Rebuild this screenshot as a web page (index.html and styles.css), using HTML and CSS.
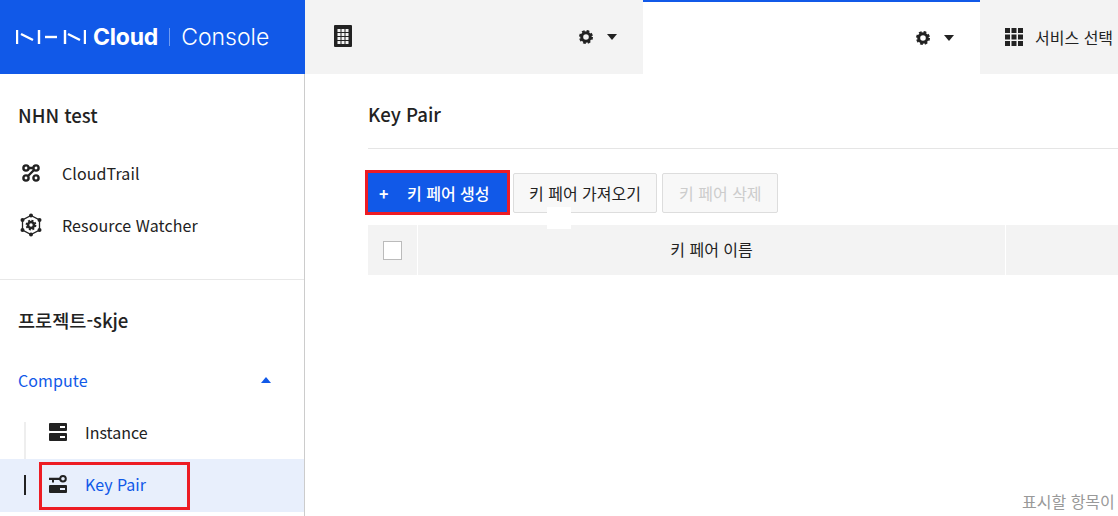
FILE: index.html
```html
<!doctype html>
<html lang="ko">
  <head>
    <meta charset="utf-8">
    <title>Key Pair - NHN Cloud Console</title>
    <link rel="stylesheet" href="styles.css">
  </head>
<body>
  <svg class="defs" width="0" height="0">
    <defs>
      <g id="gear" fill="none" stroke="#222">
        <circle cx="7" cy="7" r="4.300" stroke-width="3"/>
        <circle cx="7" cy="7" r="6" stroke-width="2" stroke-dasharray="2.700 2"/>
      </g>
    </defs>
  </svg>

  <header class="topbar">
    <div class="logo">
      <svg class="logo-mark" width="70" height="16" viewBox="0 0 70 16">
        <g stroke="#fff" stroke-width="2.400" fill="none">
          <path d="M1 1V15M5 5L17 11M23 1V15"/>
          <path d="M29 8H41"/>
          <path d="M49 1V15M52 5L64 11M69 1V15"/>
        </g>
      </svg>
      <span class="logo-cloud">Cloud</span>
      <span class="logo-sep"></span>
      <span class="logo-console">Console</span>
    </div>
    <div class="tab tab-org">
      <svg class="tab-icon" width="18" height="22" viewBox="0 0 18 22">
        <rect width="18" height="22" rx="1" fill="#222"/>
        <g fill="#f3f3f3">
          <rect x="3.500" y="4" width="3" height="3"/><rect x="7.500" y="4" width="3" height="3"/><rect x="11.500" y="4" width="3" height="3"/>
          <rect x="3.500" y="8" width="3" height="3"/><rect x="7.500" y="8" width="3" height="3"/><rect x="11.500" y="8" width="3" height="3"/>
          <rect x="3.500" y="12" width="3" height="3"/><rect x="7.500" y="12" width="3" height="3"/><rect x="11.500" y="12" width="3" height="3"/>
          <rect x="3.500" y="16" width="3" height="3"/><rect x="7.500" y="16" width="3" height="3"/><rect x="11.500" y="16" width="3" height="3"/>
        </g>
      </svg>
      <div class="tab-tools">
        <svg class="gear" width="14" height="14" viewBox="0 0 14 14"><use href="#gear"/></svg>
        <span class="caret"></span>
      </div>
    </div>
    <div class="tab tab-project">
      <div class="tab-tools">
        <svg class="gear" width="14" height="14" viewBox="0 0 14 14"><use href="#gear"/></svg>
        <span class="caret"></span>
      </div>
    </div>
    <div class="tab tab-service">
      <svg width="18" height="18" viewBox="0 0 18 18" fill="#222">
        <rect width="5" height="5"/><rect x="6.500" width="5" height="5"/><rect x="13" width="5" height="5"/>
        <rect y="6.500" width="5" height="5"/><rect x="6.500" y="6.500" width="5" height="5"/><rect x="13" y="6.500" width="5" height="5"/>
        <rect y="13" width="5" height="5"/><rect x="6.500" y="13" width="5" height="5"/><rect x="13" y="13" width="5" height="5"/>
      </svg>
      <span>서비스 선택</span>
    </div>
  </header>

  <div class="layout">
    <aside class="sidebar">
      <section class="side-org">
        <h2 class="side-title">NHN test</h2>
        <ul class="side-list">
          <li class="side-item">
            <span class="side-icon">
              <svg width="18" height="18" viewBox="0 0 18 18" fill="none" stroke="#222" stroke-width="2.400">
                <circle cx="4" cy="4" r="2.600"/><circle cx="14" cy="4" r="2.600"/>
                <circle cx="4" cy="14" r="2.600"/><circle cx="14" cy="14" r="2.600"/>
                <path d="M6.500 4H11.500M12 6L6 12"/>
              </svg>
            </span>
            CloudTrail
          </li>
          <li class="side-item">
            <span class="side-icon">
              <svg width="22" height="24" viewBox="0 0 22 24">
                <path d="M11 2.500L19.500 7V17L11 21.500 2.500 17V7Z" fill="none" stroke="#222" stroke-width="1.300"/>
                <circle cx="11" cy="2.500" r="2" fill="#222"/><circle cx="11" cy="21.500" r="2" fill="#222"/>
                <circle cx="2.500" cy="7" r="2" fill="#222"/><circle cx="19.500" cy="7" r="2" fill="#222"/>
                <circle cx="2.500" cy="17" r="2" fill="#222"/><circle cx="19.500" cy="17" r="2" fill="#222"/>
                <g fill="none" stroke="#222">
                  <circle cx="11" cy="12" r="3" stroke-width="2.600"/>
                  <circle cx="11" cy="12" r="4.600" stroke-width="1.600" stroke-dasharray="2 1.600"/>
                </g>
              </svg>
            </span>
            Resource Watcher
          </li>
        </ul>
      </section>
      <section class="side-project">
        <h2 class="side-title">프로젝트-skje</h2>
        <div class="side-group">
          <span>Compute</span>
          <span class="caret caret-up"></span>
        </div>
        <ul class="tree">
          <li class="tree-item">
            <svg width="18" height="18" viewBox="0 0 18 18">
              <rect width="18" height="8" rx="1" fill="#222"/><rect y="10" width="18" height="8" rx="1" fill="#222"/>
              <rect x="11" y="3" width="5" height="2" fill="#fff"/><rect x="11" y="13" width="5" height="2" fill="#fff"/>
            </svg>
            Instance
          </li>
          <li class="tree-item tree-active">
            <svg width="18" height="18" viewBox="0 0 18 18">
              <circle cx="14" cy="3.800" r="2.800" fill="none" stroke="#222" stroke-width="2"/>
              <path d="M0 2.800H11V5H5V7.500H3V5H0Z" fill="#222"/>
              <rect y="10" width="18" height="8" rx="1" fill="#222"/>
              <rect x="11" y="13" width="5" height="2" fill="#e8effc"/>
            </svg>
            Key Pair
            <span class="mark-box"></span>
          </li>
        </ul>
      </section>
    </aside>

    <main class="content">
      <h1 class="page-title">Key Pair</h1>
      <div class="toolbar">
        <button class="btn btn-primary"><span class="plus">+</span>키 페어 생성</button>
        <button class="btn">키 페어 가져오기</button>
        <button class="btn btn-disabled">키 페어 삭제</button>
        <span class="tip-blank"></span>
      </div>
      <div class="table-head">
        <div class="cell-check"><span class="checkbox"></span></div>
        <div class="cell-name">키 페어 이름</div>
        <div class="cell-rest"></div>
      </div>
      <p class="empty">표시할 항목이</p>
    </main>
  </div>
</body>
</html>
```

FILE: styles.css
```css
* {
    box-sizing: border-box;
}

html, body {
    margin: 0;
    height: 516px;
    overflow: hidden;
}

body {
    font-family: "Noto Sans CJK KR", "Noto Sans", sans-serif;
    font-size: 16px;
    color: #222;
    background: #fff;
}

ul {
    list-style: none;
    margin: 0;
    padding: 0;
}

.defs {
    position: absolute;
}

/* top bar */
.topbar {
    display: flex;
    height: 74px;
}

.logo {
    width: 305px;
    background: #1159e8;
    color: #fff;
    display: flex;
    align-items: center;
    padding-left: 16px;
    font-family: Inter, sans-serif;
}

.logo-mark {
    margin-right: 7px;
}

.logo-cloud {
    font-size: 23px;
    font-weight: 700;
    letter-spacing: -0.2px;
}

.logo-sep {
    width: 1px;
    height: 18px;
    background: #6f9bf2;
    margin: 0 11px;
}

.logo-console {
    font-size: 23px;
    font-weight: 300;
}

.tab {
    display: flex;
    align-items: center;
    background: #f3f3f3;
}

.tab-org {
    width: 338px;
    padding: 0 26px 0 29px;
    justify-content: space-between;
}

.tab-icon {
    margin-top: -2px;
}

.tab-project {
    width: 337px;
    background: #fff;
    border-top: 2px solid #1159e8;
    padding-right: 26px;
    justify-content: flex-end;
}

.tab-service {
    flex: 1;
    gap: 12px;
    padding-left: 25px;
    white-space: nowrap;
    overflow: hidden;
}

.tab-tools {
    display: flex;
    align-items: center;
    gap: 14px;
}

.caret {
    width: 0;
    height: 0;
    border-left: 5px solid transparent;
    border-right: 5px solid transparent;
    border-top: 6px solid #222;
}

.caret-up {
    border-top: 0;
    border-bottom: 6px solid #1159e8;
}

/* sidebar */
.layout {
    display: flex;
    height: 442px;
}

.sidebar {
    width: 305px;
    flex: none;
    border-right: 1px solid #ccc;
}

.side-org {
    padding: 27px 0 28px;
    border-bottom: 1px solid #e8e8e8;
}

.side-title {
    margin: 0;
    padding-left: 18px;
    font-size: 18.6px;
    font-weight: 500;
    line-height: 28px;
}

.side-list {
    margin-top: 18px;
}

.side-item {
    display: flex;
    align-items: center;
    height: 52px;
    padding-left: 20px;
    letter-spacing: 0.1px;
}

.side-icon {
    width: 42px;
    display: flex;
    align-items: center;
}

.side-item:first-child svg {
    margin-left: 2px;
}

.side-project {
    padding-top: 26px;
}

.side-group {
    display: flex;
    align-items: center;
    justify-content: space-between;
    height: 52px;
    margin-top: 20px;
    padding: 0 33px 0 18px;
    color: #1159e8;
    letter-spacing: 0.1px;
}

.tree {
    position: relative;
}

.tree::before {
    content: "";
    position: absolute;
    left: 24px;
    top: 16px;
    bottom: 0;
    width: 2px;
    background: #eee;
}

.tree-item {
    position: relative;
    display: flex;
    align-items: center;
    height: 52px;
    padding-left: 49px;
    gap: 18px;
}

.tree-active {
    height: 53px;
    margin-top: 1px;
    padding-bottom: 3px;
    background: #e8effc;
    color: #1159e8;
}

.tree-active::before {
    content: "";
    position: absolute;
    left: 24px;
    top: 16px;
    width: 2px;
    height: 20px;
    background: #222;
}

.mark-box {
    position: absolute;
    left: 39px;
    top: 3px;
    width: 151px;
    height: 48px;
    border: 3px solid #ed1c24;
}

/* main */
.content {
    flex: 1;
    min-width: 0;
    padding-left: 63px;
    overflow: hidden;
}

.page-title {
    margin: 0;
    height: 75px;
    padding-top: 26px;
    font-size: 18.6px;
    font-weight: 500;
    line-height: 28px;
    border-bottom: 1px solid #e5e5e5;
}

.toolbar {
    position: relative;
    display: flex;
    align-items: flex-start;
    gap: 5px;
    margin-top: 24px;
}

.btn {
    height: 40px;
    padding: 0 15px;
    font: inherit;
    color: #222;
    background: #f8f8f8;
    border: 1px solid #ddd;
    border-radius: 2px;
}

.btn-primary {
    width: 139px;
    height: 39px;
    margin-right: 1px;
    padding: 0 0 0 10px;
    text-align: left;
    color: #fff;
    font-weight: 500;
    background: #1159e8;
    border-color: #1159e8;
    outline: 3px solid #ed1c24;
    border-radius: 0;
}

.plus {
    display: inline-block;
    width: 28px;
    font-weight: 700;
}

.btn-disabled {
    padding: 0 15px 0 16px;
    color: #ccc;
}

.tip-blank {
    position: absolute;
    left: 179px;
    top: 34px;
    width: 24px;
    height: 22px;
    background: #fff;
}

.table-head {
    display: flex;
    height: 50px;
    margin-top: 12px;
    background: #f3f3f3;
}

.cell-check {
    width: 50px;
    flex: none;
    display: flex;
    align-items: center;
    justify-content: center;
    border-right: 1px solid #fff;
}

.checkbox {
    width: 19px;
    height: 19px;
    background: #fff;
    border: 1px solid #bbb;
    margin-right: 1px;
}

.cell-name {
    width: 588px;
    flex: none;
    display: flex;
    align-items: center;
    justify-content: center;
    padding-bottom: 2px;
    border-right: 1px solid #fff;
}

.cell-rest {
    flex: 1;
}

.empty {
    margin: 215px 0 0 654px;
    line-height: 22px;
    color: #999;
    white-space: nowrap;
}
```
